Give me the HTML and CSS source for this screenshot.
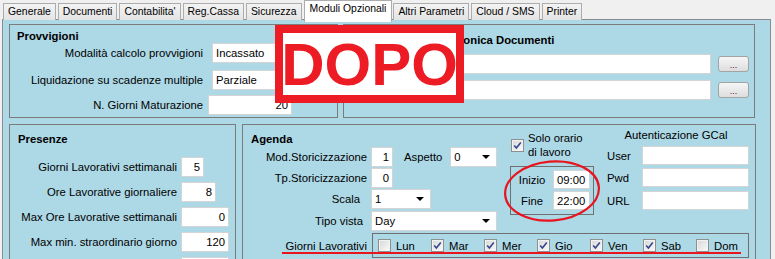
FILE: index.html
```html
<!DOCTYPE html>
<html lang="it">
<head>
  <meta charset="UTF-8">
  <title>Parametri - Moduli Opzionali</title>
  <link rel="stylesheet" href="styles.css">
</head>
<body>

  <div class="tabs">
    <div class="tab">Generale</div>
    <div class="tab">Documenti</div>
    <div class="tab">Contabilita'</div>
    <div class="tab">Reg.Cassa</div>
    <div class="tab">Sicurezza</div>
    <div class="tab active">Moduli Opzionali</div>
    <div class="tab">Altri Parametri</div>
    <div class="tab">Cloud / SMS</div>
    <div class="tab">Printer</div>
  </div>

  <div class="page">

    <div class="row top-row">
      <div class="box provvigioni">
        <div class="box-title">Provvigioni</div>
        <div class="prov-line">
          <span class="prov-lbl">Modalità calcolo provvigioni</span>
          <div class="combo prov-combo">Incassato</div>
        </div>
        <div class="prov-line second">
          <span class="prov-lbl">Liquidazione su scadenze multiple</span>
          <div class="combo prov-combo">Parziale</div>
        </div>
        <div class="prov-line third">
          <span class="prov-lbl">N. Giorni Maturazione</span>
          <input class="field num prov-days" type="text" value="20">
        </div>
      </div>

      <div class="box documenti">
        <div class="box-title">Conservazione Elettronica Documenti</div>
        <div class="doc-line">
          <input class="field doc-path" type="text" value="">
          <button class="dots">...</button>
        </div>
        <div class="doc-line second">
          <input class="field doc-path" type="text" value="">
          <button class="dots">...</button>
        </div>
      </div>
    </div>

    <div class="row bottom-row">
      <div class="box presenze">
        <div class="box-title">Presenze</div>
        <div class="pres-list">
          <div class="pres-line">
            <span class="pres-lbl">Giorni Lavorativi settimanali</span>
            <input class="field num w-xs" type="text" value="5">
          </div>
          <div class="pres-line">
            <span class="pres-lbl">Ore Lavorative giornaliere</span>
            <input class="field num w-sm" type="text" value="8">
          </div>
          <div class="pres-line">
            <span class="pres-lbl">Max Ore Lavorative settimanali</span>
            <input class="field num w-md" type="text" value="0">
          </div>
          <div class="pres-line">
            <span class="pres-lbl">Max min. straordinario giorno</span>
            <input class="field num w-md" type="text" value="120">
          </div>
          <div class="pres-line">
            <span class="pres-lbl"></span>
            <input class="field num w-md" type="text" value="">
          </div>
        </div>
      </div>

      <div class="box agenda">
        <div class="agenda-top">
          <div class="col-a">
            <div class="box-title">Agenda</div>
            <div class="ag-line">
              <span class="ag-lbl">Mod.Storicizzazione</span>
              <input class="field num ag-num" type="text" value="1">
              <span class="aspetto-lbl">Aspetto</span>
              <div class="combo aspetto-combo">0</div>
            </div>
            <div class="ag-line">
              <span class="ag-lbl">Tp.Storicizzazione</span>
              <input class="field num ag-num" type="text" value="0">
            </div>
            <div class="ag-line">
              <span class="ag-lbl scala">Scala</span>
              <div class="combo scala-combo">1</div>
            </div>
            <div class="ag-line last">
              <span class="ag-lbl vista">Tipo vista</span>
              <div class="combo vista-combo">Day</div>
            </div>
          </div>

          <div class="col-b">
            <div class="check-line">
              <span class="cb checked"><svg viewBox="0 0 11 11"><path d="M2.2 5.4 L4.4 8 L8.8 2.4"/></svg></span>
              <span class="check-text">Solo orario<br>di lavoro</span>
            </div>
            <div class="time-frame">
              <div class="time-line">
                <span class="time-lbl">Inizio</span>
                <input class="field time" type="text" value="09:00">
              </div>
              <div class="time-line second">
                <span class="time-lbl">Fine</span>
                <input class="field time" type="text" value="22:00">
              </div>
              <svg class="mark-ellipse" width="98" height="62" viewBox="0 0 98 62">
                <ellipse cx="49" cy="31" rx="47" ry="29.5" transform="rotate(-5 49 31)"/>
              </svg>
            </div>
          </div>

          <div class="col-c">
            <div class="gcal-title">Autenticazione GCal</div>
            <div class="gcal-line">
              <span class="gcal-lbl">User</span>
              <input class="field gcal-field" type="text" value="">
            </div>
            <div class="gcal-line pwd">
              <span class="gcal-lbl">Pwd</span>
              <input class="field gcal-field" type="text" value="">
            </div>
            <div class="gcal-line">
              <span class="gcal-lbl">URL</span>
              <input class="field gcal-field" type="text" value="">
            </div>
          </div>
        </div>

        <div class="giorni-line">
          <span class="ag-lbl">Giorni Lavorativi</span>
          <div class="days">
            <div class="day"><span class="cb"></span>Lun</div>
            <div class="day"><span class="cb checked"><svg viewBox="0 0 11 11"><path d="M2.2 5.4 L4.4 8 L8.8 2.4"/></svg></span>Mar</div>
            <div class="day"><span class="cb checked"><svg viewBox="0 0 11 11"><path d="M2.2 5.4 L4.4 8 L8.8 2.4"/></svg></span>Mer</div>
            <div class="day"><span class="cb checked"><svg viewBox="0 0 11 11"><path d="M2.2 5.4 L4.4 8 L8.8 2.4"/></svg></span>Gio</div>
            <div class="day"><span class="cb checked"><svg viewBox="0 0 11 11"><path d="M2.2 5.4 L4.4 8 L8.8 2.4"/></svg></span>Ven</div>
            <div class="day"><span class="cb checked"><svg viewBox="0 0 11 11"><path d="M2.2 5.4 L4.4 8 L8.8 2.4"/></svg></span>Sab</div>
            <div class="day"><span class="cb"></span>Dom</div>
          </div>
          <div class="mark-line"></div>
        </div>
      </div>
    </div>

  </div>

  <!-- annotation stamp over the screenshot -->
  <div class="stamp">DOPO</div>

</body>
</html>
```

FILE: styles.css
```css
body {
  margin: 0;
  width: 775px;
  height: 259px;
  overflow: hidden;
  position: relative;
  background: #f0f0f0;
  font-family: "Liberation Sans", Arial, sans-serif;
  font-size: 11.3px;
  color: #000;
}

/* tab strip */
.tabs {
  display: flex;
  align-items: flex-start;
  height: 19px;
  padding-left: 3px;
  position: relative;
  z-index: 2;
}
.tab {
  margin-top: 3px;
  margin-right: 2px;
  height: 16px;
  padding: 0 4px;
  border: 1px solid #acacac;
  border-bottom: none;
  background: linear-gradient(#f3f3f3, #e4e4e4);
  font-size: 10.4px;
  line-height: 16px;
  white-space: nowrap;
}
.tab.active {
  margin-top: 0;
  margin-right: 1px;
  height: 21px;
  padding: 0 5px;
  background: #fff;
  line-height: 16px;
}

/* tab page */
.page {
  margin-left: 2px;
  width: 769px;
  height: 245px;
  box-sizing: border-box;
  border: 1px solid #898c95;
  background: #add8e6;
  padding: 4px 0 0 6px;
}
.row {
  display: flex;
}
.top-row {
  gap: 5px;
}
.bottom-row {
  margin-top: 6px;
  gap: 6px;
}
.box {
  box-sizing: border-box;
  border: 1px solid #7b7b7b;
}
.box-title {
  font-weight: bold;
  line-height: 13px;
  white-space: nowrap;
}

/* common controls */
.field {
  box-sizing: border-box;
  height: 20px;
  margin: 0;
  border: 1px solid #d4d4d4;
  background: #fff;
  font: inherit;
  color: #000;
  padding: 0 3px;
  outline: none;
}
.num {
  text-align: right;
}
.combo {
  box-sizing: border-box;
  height: 20px;
  border: 1px solid #d4d4d4;
  background: #fff;
  padding: 0 6px 0 3px;
  display: flex;
  align-items: center;
  justify-content: space-between;
}
.combo::after {
  content: "";
  border-left: 4px solid transparent;
  border-right: 4px solid transparent;
  border-top: 4px solid #000;
}
.dots {
  box-sizing: border-box;
  width: 31px;
  height: 16px;
  margin-left: 7px;
  padding: 3px 0 0;
  border: 1px solid #a3a3a3;
  border-radius: 3px;
  background: linear-gradient(#f6f6f6, #dddddd);
  font-family: "Liberation Sans", Arial, sans-serif;
  font-size: 9px;
  line-height: 9px;
  color: #5a005a;
}
.cb {
  box-sizing: border-box;
  width: 13px;
  height: 13px;
  flex: none;
  border: 1px solid #8e8f8f;
  background: linear-gradient(135deg, #d6d6d6, #fbfbfb);
  box-shadow: inset 0 0 0 1px #f2f2f2;
  display: flex;
  align-items: center;
  justify-content: center;
}
.cb svg {
  width: 11px;
  height: 11px;
}
.cb path {
  fill: none;
  stroke: #34478f;
  stroke-width: 1.6;
}

/* Provvigioni */
.provvigioni {
  width: 329px;
  height: 94px;
}
.provvigioni .box-title {
  margin: 5px 0 0 7px;
}
.prov-line {
  display: flex;
  align-items: center;
  height: 20px;
}
.prov-line.second {
  margin-top: 7px;
}
.prov-line.third {
  margin-top: 5px;
}
.prov-lbl {
  width: 193px;
  text-align: right;
  white-space: nowrap;
}
.prov-combo {
  margin-left: 9px;
  width: 95px;
}
.prov-days {
  margin-left: 5px;
  width: 84px;
}

/* Conservazione documenti */
.documenti {
  width: 412px;
  height: 94px;
}
.documenti .box-title {
  margin: 9px 0 0 7px;
}
.doc-line {
  display: flex;
  align-items: center;
  height: 20px;
  margin: 7px 5px 0 96px;
}
.doc-line.second {
  margin-top: 6px;
}
.doc-path {
  flex: 1;
}

/* Presenze */
.presenze {
  width: 227px;
  height: 150px;
}
.presenze .box-title {
  margin: 8px 0 0 8px;
}
.pres-list {
  margin-top: 11px;
  display: flex;
  flex-direction: column;
  gap: 5px;
}
.pres-line {
  display: flex;
  align-items: center;
  height: 20px;
}
.pres-lbl {
  width: 167px;
  text-align: right;
  white-space: nowrap;
}
.pres-line .field {
  margin-left: 4px;
}
.w-xs { width: 23px; }
.w-sm { width: 35px; }
.w-md { width: 48px; }

/* Agenda */
.agenda {
  width: 514px;
  height: 150px;
}
.agenda-top {
  display: flex;
  height: 105px;
}
.col-a {
  width: 257px;
}
.col-a .box-title {
  margin: 8px 0 0 8px;
}
.ag-line {
  display: flex;
  align-items: center;
  height: 20px;
  margin-top: 1px;
}
.ag-line:first-of-type {
  margin-top: 0;
}
.ag-line.last {
  margin-top: 2px;
}
.ag-lbl {
  width: 124px;
  text-align: right;
  white-space: nowrap;
}
.ag-lbl.scala {
  width: 117px;
  padding-right: 7px;
}
.ag-lbl.vista {
  width: 120px;
  padding-right: 4px;
}
.ag-num {
  margin-left: 4px;
  width: 22px;
}
.aspetto-lbl {
  margin-left: 11px;
}
.aspetto-combo {
  margin-left: 8px;
  width: 47px;
}
.scala-combo {
  margin-left: 4px;
  width: 60px;
}
.vista-combo {
  margin-left: 4px;
  width: 126px;
}

.col-b {
  margin-left: 10px;
  width: 84px;
  padding-top: 6px;
}
.check-line {
  display: flex;
  align-items: center;
}
.check-line .cb {
  margin-left: 1px;
}
.check-text {
  margin-left: 4px;
  line-height: 14px;
  white-space: nowrap;
}
.time-frame {
  position: relative;
  box-sizing: border-box;
  margin-top: 7px;
  height: 49px;
  border: 1px solid #6f6f6f;
  padding-top: 3px;
}
.time-line {
  display: flex;
  align-items: center;
  height: 19px;
}
.time-line.second {
  margin-top: 2px;
}
.time-lbl {
  width: 42px;
  text-align: center;
}
.time {
  width: 37px;
  height: 19px;
}
.mark-ellipse {
  position: absolute;
  left: -8px;
  top: -7px;
}
.mark-ellipse ellipse {
  fill: none;
  stroke: #e8141e;
  stroke-width: 2.2;
}

.col-c {
  margin-left: 6px;
  width: 152px;
  padding-top: 4px;
}
.gcal-title {
  text-align: center;
  line-height: 13px;
}
.gcal-line {
  display: flex;
  align-items: center;
  height: 19px;
  margin-top: 4px;
}
.gcal-line.pwd {
  margin-top: 3px;
}
.gcal-lbl {
  width: 35px;
  padding-left: 7px;
}
.gcal-field {
  width: 107px;
  height: 19px;
}

.giorni-line {
  position: relative;
  display: flex;
  align-items: center;
  margin-top: 3px;
  height: 25px;
}
.days {
  box-sizing: border-box;
  margin-left: 5px;
  width: 377px;
  height: 25px;
  border: 1px solid #6f6f6f;
  padding-left: 5px;
  display: grid;
  grid-template-columns: repeat(7, 53px);
  align-items: center;
}
.day {
  display: flex;
  align-items: center;
  gap: 5px;
}
.mark-line {
  position: absolute;
  left: 39px;
  top: 19px;
  width: 459px;
  height: 2px;
  background: #e8141e;
}

/* red stamp */
.stamp {
  position: absolute;
  left: 275px;
  top: 25px;
  width: 189px;
  height: 78px;
  box-sizing: border-box;
  border: 8px solid #ed1c24;
  background: #fff;
  color: #ed1c24;
  font-family: "Liberation Sans", Arial, sans-serif;
  font-weight: bold;
  font-size: 60px;
  line-height: 1;
  padding-top: 2px;
  display: flex;
  align-items: center;
  justify-content: center;
  z-index: 3;
}
```
